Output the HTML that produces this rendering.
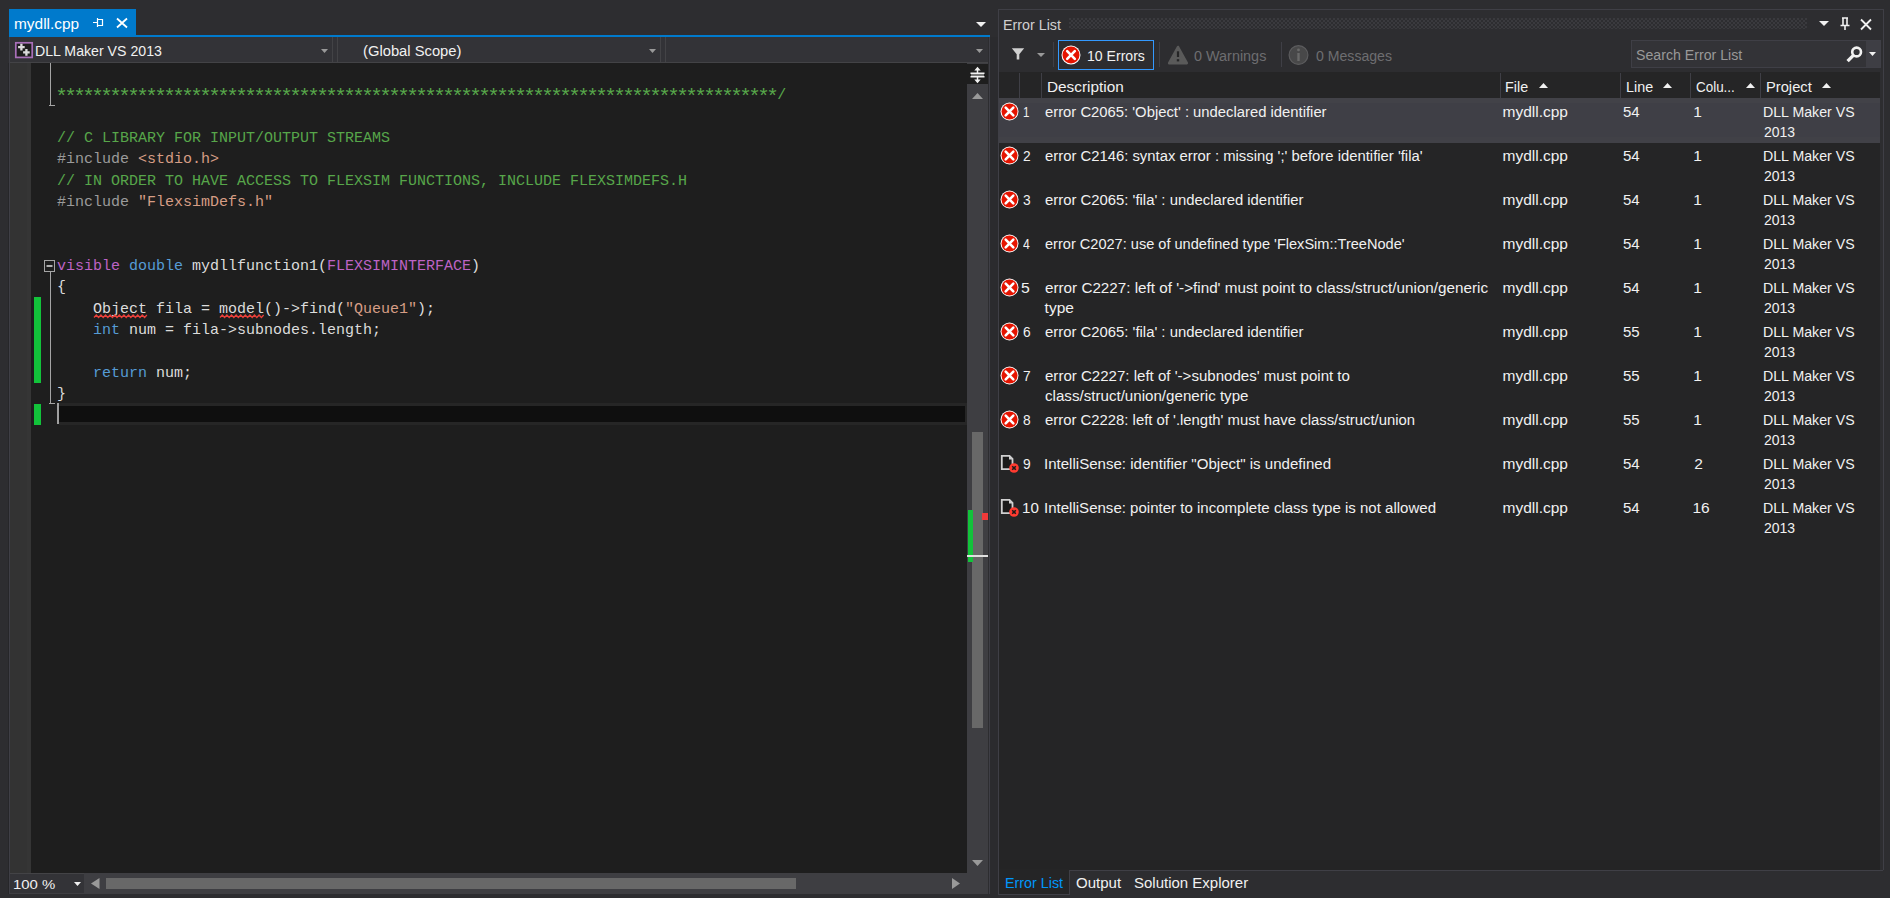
<!DOCTYPE html>
<html><head><meta charset="utf-8"><style>
*{margin:0;padding:0;box-sizing:border-box}
html,body{width:1890px;height:898px;overflow:hidden;background:#2d2d30;font-family:"Liberation Sans",sans-serif;color:#f1f1f1}
.a{position:absolute}
.ui{font-size:15px;white-space:pre;line-height:20px}
.code{font-family:"Liberation Mono",monospace;font-size:15px;white-space:pre;line-height:21.333px;color:#dcdcdc}
.cm{color:#57a64a}.pp{color:#9b9b9b}.st{color:#d69d85}.kw{color:#569cd6}.mc{color:#bd63c5}
svg{position:absolute;overflow:visible}
</style></head><body>
<div class="a" style="left:9px;top:9px;width:127px;height:26px;background:#007acc;"></div>
<div class="a" style="left:13.70px;top:14.00px;font-family:'Liberation Sans',sans-serif;font-size:15.5px;line-height:20px;white-space:pre;color:#ffffff;transform:scaleX(0.9953);transform-origin:0 0;">mydll.cpp</div>
<svg style="left:92px;top:17px" width="12" height="11" viewBox="0 0 12 11"><path d="M1 5.5H5.5M5.5 1V10M5.5 2.5H10.5V8.5H5.5" stroke="#fff" stroke-width="1.2" fill="none"/></svg>
<svg style="left:116px;top:18px" width="12" height="10" viewBox="0 0 12 10"><path d="M1 0.5L11 9.5M11 0.5L1 9.5" stroke="#fff" stroke-width="1.8" fill="none"/></svg>
<div class="a" style="left:9px;top:35px;width:981px;height:2px;background:#007acc;"></div>
<svg style="left:976.0px;top:22px" width="10" height="5" viewBox="0 0 10 5"><path d="M0 0H10L5.0 5Z" fill="#f1f1f1"/></svg>
<div class="a" style="left:9px;top:37px;width:981px;height:26px;background:#333337;border-bottom:1px solid #434346"></div>
<div class="a" style="left:9px;top:37px;width:1px;height:26px;background:#3f3f46;"></div>
<div class="a" style="left:332px;top:37px;width:1px;height:25px;background:#434346;"></div>
<div class="a" style="left:337px;top:37px;width:1px;height:25px;background:#434346;"></div>
<div class="a" style="left:660px;top:37px;width:1px;height:25px;background:#434346;"></div>
<div class="a" style="left:665px;top:37px;width:1px;height:25px;background:#434346;"></div>
<svg style="left:14px;top:41px" width="19" height="17" viewBox="0 0 19 17"><rect x="1.8" y="1.8" width="16.4" height="14.6" fill="#1e1e1e" stroke="#a86fb8" stroke-width="1.7"/><path d="M7.4 2.8V9.4M4.1 6.1H10.7" stroke="#dcdcdc" stroke-width="2.3"/><path d="M12.4 8.1V14.7M9.1 11.4H15.7" stroke="#dcdcdc" stroke-width="2.3"/></svg>
<div class="a" style="left:35.29px;top:41.00px;font-family:'Liberation Sans',sans-serif;font-size:15.5px;line-height:20px;white-space:pre;color:#f1f1f1;transform:scaleX(0.9130);transform-origin:0 0;">DLL Maker VS 2013</div>
<div class="a" style="left:362.95px;top:41.00px;font-family:'Liberation Sans',sans-serif;font-size:15.5px;line-height:20px;white-space:pre;color:#f1f1f1;transform:scaleX(0.9520);transform-origin:0 0;">(Global Scope)</div>
<svg style="left:321.0px;top:49px" width="7" height="4" viewBox="0 0 7 4"><path d="M0 0H7L3.5 4Z" fill="#999999"/></svg>
<svg style="left:648.5px;top:49px" width="7" height="4" viewBox="0 0 7 4"><path d="M0 0H7L3.5 4Z" fill="#999999"/></svg>
<svg style="left:975.5px;top:49px" width="7" height="4" viewBox="0 0 7 4"><path d="M0 0H7L3.5 4Z" fill="#999999"/></svg>
<div class="a" style="left:9px;top:63px;width:1px;height:831px;background:#3f3f46;"></div>
<div class="a" style="left:10px;top:63px;width:17px;height:810px;background:#333333;"></div>
<div class="a" style="left:27px;top:63px;width:4px;height:810px;background:#353535;"></div>
<div class="a" style="left:8px;top:63px;width:1px;height:831px;background:#262629;"></div>
<div class="a" style="left:31px;top:63px;width:936px;height:810px;background:#1e1e1e;"></div>
<div class="a" style="left:59px;top:403px;width:908px;height:22px;background:#262626;"></div>
<div class="a" style="left:59px;top:406px;width:906px;height:16px;background:#0f0f0f;"></div>
<div class="a" style="left:57px;top:403px;width:2px;height:21px;background:#a0a0a0;"></div>
<div class="a" style="left:34px;top:297px;width:7px;height:86px;background:#12c33a;"></div>
<div class="a" style="left:34px;top:404px;width:7px;height:21px;background:#12c33a;"></div>
<div class="a" style="left:50px;top:63px;width:1px;height:43px;background:#a5a5a5;"></div>
<div class="a" style="left:49px;top:105px;width:6px;height:1px;background:#a5a5a5;"></div>
<svg style="left:43px;top:259px" width="13" height="13" viewBox="0 0 13 13"><rect x="1.5" y="1.5" width="10" height="11" fill="#1e1e1e" stroke="#a5a5a5" stroke-width="1"/><path d="M3.5 7H9.5" stroke="#f1f1f1" stroke-width="1.4"/></svg>
<div class="a" style="left:50px;top:272px;width:1px;height:132px;background:#a5a5a5;"></div>
<div class="a" style="left:49px;top:403px;width:6px;height:1px;background:#a5a5a5;"></div>
<div class="a code" style="left:57px;top:83.333px"><span class="cm"><span style="font-size:21px;letter-spacing:-3.6px;position:relative;top:4px;left:-1.8px">********************************************************************************</span>/</span>

<span class="cm">// C LIBRARY FOR INPUT/OUTPUT STREAMS</span>
<span class="pp">#include </span><span class="st">&lt;stdio.h&gt;</span>
<span class="cm">// IN ORDER TO HAVE ACCESS TO FLEXSIM FUNCTIONS, INCLUDE FLEXSIMDEFS.H</span>
<span class="pp">#include </span><span class="st">"FlexsimDefs.h"</span>


<span class="mc">visible</span> <span class="kw">double</span> mydllfunction1(<span class="mc">FLEXSIMINTERFACE</span>)
{
    Object fila = model()-&gt;find(<span class="st">"Queue1"</span>);
    <span class="kw">int</span> num = fila-&gt;subnodes.length;

    <span class="kw">return</span> num;
}</div>
<svg style="left:0;top:0" width="1890" height="898"><path d="M94 317.5 L96.3 315 L98.6 317.5 L100.9 315 L103.2 317.5 L105.5 315 L107.8 317.5 L110.1 315 L112.4 317.5 L114.7 315 L117.0 317.5 L119.3 315 L121.6 317.5 L123.9 315 L126.2 317.5 L128.5 315 L130.8 317.5 L133.1 315 L135.4 317.5 L137.7 315 L140.0 317.5 L142.3 315 L144.6 317.5 L146.9 315" stroke="#e8403a" stroke-width="1.3" fill="none"/></svg>
<svg style="left:0;top:0" width="1890" height="898"><path d="M220 317.5 L222.3 315 L224.6 317.5 L226.9 315 L229.2 317.5 L231.5 315 L233.8 317.5 L236.1 315 L238.4 317.5 L240.7 315 L243.0 317.5 L245.3 315 L247.6 317.5 L249.9 315 L252.2 317.5 L254.5 315 L256.8 317.5 L259.1 315 L261.4 317.5 L263.7 315" stroke="#e8403a" stroke-width="1.3" fill="none"/></svg>
<div class="a" style="left:967px;top:63px;width:21px;height:831px;background:#3e3e42;"></div>
<div class="a" style="left:967px;top:64px;width:21px;height:20px;background:#1e1e1e;"></div>
<svg style="left:970px;top:66px" width="15" height="18" viewBox="0 0 15 18"><path d="M7.5 3V15" stroke="#f1f1f1" stroke-width="1.5"/><path d="M4.3 4.5L7.5 0.8L10.7 4.5Z M4.3 13.5L7.5 17.2L10.7 13.5Z" fill="#f1f1f1"/><path d="M0.5 7.2H14.5M0.5 10.8H14.5" stroke="#f1f1f1" stroke-width="1.5"/><path d="M1 9H14" stroke="#777" stroke-width="2"/></svg>
<svg style="left:972.0px;top:93px" width="11" height="6" viewBox="0 0 11 6"><path d="M0 6H11L5.5 0Z" fill="#999999"/></svg>
<div class="a" style="left:972px;top:432px;width:11px;height:296px;background:#686868;"></div>
<svg style="left:972.0px;top:860px" width="11" height="6" viewBox="0 0 11 6"><path d="M0 0H11L5.5 6Z" fill="#999999"/></svg>
<div class="a" style="left:968px;top:510px;width:5px;height:52px;background:#12c33a;"></div>
<div class="a" style="left:982px;top:513px;width:6px;height:7px;background:#f03a3a;"></div>
<div class="a" style="left:967px;top:555px;width:21px;height:2px;background:#e0e0e0;"></div>
<div class="a" style="left:10px;top:873px;width:978px;height:21px;background:#3e3e42;"></div>
<div class="a" style="left:10px;top:873px;width:74px;height:20px;background:#333337;border-top:1px solid #434346"></div>
<div class="a" style="left:12.69px;top:875.00px;font-family:'Liberation Sans',sans-serif;font-size:13.5px;line-height:20px;white-space:pre;color:#f1f1f1;transform:scaleX(1.1054);transform-origin:0 0;">100 %</div>
<svg style="left:74.0px;top:882px" width="7" height="4" viewBox="0 0 7 4"><path d="M0 0H7L3.5 4Z" fill="#f1f1f1"/></svg>
<svg style="left:91px;top:878px" width="9" height="11" viewBox="0 0 9 11"><path d="M8.5 0V11L0 5.5Z" fill="#999"/></svg>
<div class="a" style="left:106px;top:878px;width:690px;height:11px;background:#686868;"></div>
<svg style="left:952px;top:878px" width="8" height="11" viewBox="0 0 8 11"><path d="M0 0V11L8 5.5Z" fill="#999"/></svg>
<div class="a" style="left:988px;top:37px;width:1px;height:857px;background:#2d2d30;"></div>
<div class="a" style="left:989px;top:37px;width:1px;height:857px;background:#3f3f46;"></div>
<div class="a" style="left:990px;top:37px;width:8px;height:861px;background:#2b2b2e;"></div>
<div class="a" style="left:998px;top:9px;width:886px;height:862px;background:#2d2d30;border:1px solid #3f3f46"></div>
<div class="a" style="left:1002.68px;top:15.20px;font-family:'Liberation Sans',sans-serif;font-size:15.5px;line-height:20px;white-space:pre;color:#d0d0d0;transform:scaleX(0.9210);transform-origin:0 0;">Error List</div>
<div class="a" style="left:1069px;top:18px;width:738px;height:11px;background-image:radial-gradient(circle at 1px 1px,#3a3a3e 0.9px,transparent 1.1px),radial-gradient(circle at 3px 3px,#3a3a3e 0.9px,transparent 1.1px);background-size:4px 4px"></div>
<svg style="left:1819.0px;top:21px" width="10" height="5" viewBox="0 0 10 5"><path d="M0 0H10L5.0 5Z" fill="#f1f1f1"/></svg>
<svg style="left:1839px;top:17px" width="12" height="14" viewBox="0 0 12 14"><path d="M3 1H9M4 1V8M8 1V8M1.5 8.5H10.5M6 8.5V13" stroke="#f1f1f1" stroke-width="1.6" fill="none"/></svg>
<svg style="left:1860px;top:19px" width="12" height="11" viewBox="0 0 12 11"><path d="M1 0.5L11 10.5M11 0.5L1 10.5" stroke="#f1f1f1" stroke-width="1.8" fill="none"/></svg>
<svg style="left:1011px;top:47.5px" width="14" height="13" viewBox="0 0 14 13"><path d="M0.8 0.3H13.2L8.3 6.2V11.5H5.7V6.2Z" fill="#d0d0d0"/></svg>
<svg style="left:1037.0px;top:53px" width="8" height="4" viewBox="0 0 8 4"><path d="M0 0H8L4.0 4Z" fill="#999999"/></svg>
<div class="a" style="left:1053px;top:42px;width:1px;height:25px;background:#3f3f46;"></div>
<div class="a" style="left:1058px;top:40px;width:96px;height:30px;background:#2d2d30;border:1px solid #3399ff"></div>
<svg style="left:1061px;top:45px" width="20" height="20" viewBox="0 0 20 20"><circle cx="10.0" cy="10.0" r="9.5" fill="#fff"/><circle cx="10.0" cy="10.0" r="8.5" fill="#e51400"/><path d="M6.2 6.2L13.8 13.8M13.8 6.2L6.2 13.8" stroke="#fff" stroke-width="2.6" stroke-linecap="round"/></svg>
<div class="a" style="left:1087.09px;top:45.60px;font-family:'Liberation Sans',sans-serif;font-size:15.5px;line-height:20px;white-space:pre;color:#f1f1f1;transform:scaleX(0.9079);transform-origin:0 0;">10 Errors</div>
<div class="a" style="left:1159px;top:42px;width:1px;height:25px;background:#3f3f46;"></div>
<svg style="left:1167px;top:45px" width="22" height="20" viewBox="0 0 22 20"><path d="M11 2L19.8 18.2H2.2Z" fill="#5a5a5a" stroke="#5a5a5a" stroke-width="2.6" stroke-linejoin="round"/><path d="M11 6.3V12" stroke="#252526" stroke-width="2.2"/><rect x="9.8" y="14.2" width="2.4" height="2.2" fill="#252526"/></svg>
<div class="a" style="left:1193.50px;top:45.60px;font-family:'Liberation Sans',sans-serif;font-size:15.5px;line-height:20px;white-space:pre;color:#6d6d70;transform:scaleX(0.9295);transform-origin:0 0;">0 Warnings</div>
<div class="a" style="left:1281px;top:42px;width:1px;height:25px;background:#3f3f46;"></div>
<svg style="left:1288px;top:45px" width="21" height="21" viewBox="0 0 21 21"><circle cx="10.5" cy="10" r="9.4" fill="#484849" stroke="#5c5c5e" stroke-width="1.2"/><rect x="9.3" y="8" width="2.4" height="8" fill="#6a6a6a"/><circle cx="10.5" cy="4.9" r="1.4" fill="#6a6a6a"/></svg>
<div class="a" style="left:1315.60px;top:45.60px;font-family:'Liberation Sans',sans-serif;font-size:15.5px;line-height:20px;white-space:pre;color:#6d6d70;transform:scaleX(0.9096);transform-origin:0 0;">0 Messages</div>
<div class="a" style="left:1631px;top:40px;width:250px;height:28px;background:#333337;border:1px solid #3f3f46"></div>
<div class="a" style="left:1866px;top:41px;width:14px;height:26px;background:#3e3e44;"></div>
<div class="a" style="left:1636.09px;top:44.70px;font-family:'Liberation Sans',sans-serif;font-size:15.5px;line-height:20px;white-space:pre;color:#999999;transform:scaleX(0.9129);transform-origin:0 0;">Search Error List</div>
<svg style="left:1845px;top:46px" width="17" height="17" viewBox="0 0 17 17"><circle cx="11.6" cy="6" r="4.4" stroke="#f1f1f1" stroke-width="2.6" fill="none"/><path d="M8.6 9.2L2.6 15.2" stroke="#f1f1f1" stroke-width="3.3"/></svg>
<svg style="left:1869.0px;top:52px" width="7" height="4" viewBox="0 0 7 4"><path d="M0 0H7L3.5 4Z" fill="#f1f1f1"/></svg>
<div class="a" style="left:999px;top:72px;width:881px;height:798px;background:#252526;"></div>
<div class="a" style="left:999px;top:73px;width:881px;height:25px;background:#252526;"></div>
<div class="a" style="left:1019px;top:73px;width:1px;height:25px;background:#3f3f46;"></div>
<div class="a" style="left:1041px;top:73px;width:1px;height:25px;background:#3f3f46;"></div>
<div class="a" style="left:1500px;top:73px;width:1px;height:25px;background:#3f3f46;"></div>
<div class="a" style="left:1620px;top:73px;width:1px;height:25px;background:#3f3f46;"></div>
<div class="a" style="left:1690px;top:73px;width:1px;height:25px;background:#3f3f46;"></div>
<div class="a" style="left:1760px;top:73px;width:1px;height:25px;background:#3f3f46;"></div>
<div class="a" style="left:1046.91px;top:77.00px;font-family:'Liberation Sans',sans-serif;font-size:15.5px;line-height:20px;white-space:pre;color:#f1f1f1;transform:scaleX(0.9895);transform-origin:0 0;">Description</div>
<div class="a" style="left:1505.48px;top:77.00px;font-family:'Liberation Sans',sans-serif;font-size:15.5px;line-height:20px;white-space:pre;color:#f1f1f1;transform:scaleX(0.9250);transform-origin:0 0;">File</div>
<svg style="left:1539.0px;top:83px" width="9" height="5" viewBox="0 0 9 5"><path d="M0 5H9L4.5 0Z" fill="#f1f1f1"/></svg>
<div class="a" style="left:1625.58px;top:77.00px;font-family:'Liberation Sans',sans-serif;font-size:15.5px;line-height:20px;white-space:pre;color:#f1f1f1;transform:scaleX(0.9250);transform-origin:0 0;">Line</div>
<svg style="left:1663.0px;top:83px" width="9" height="5" viewBox="0 0 9 5"><path d="M0 5H9L4.5 0Z" fill="#f1f1f1"/></svg>
<div class="a" style="left:1696.30px;top:77.00px;font-family:'Liberation Sans',sans-serif;font-size:15.5px;line-height:20px;white-space:pre;color:#f1f1f1;transform:scaleX(0.8659);transform-origin:0 0;">Colu...</div>
<svg style="left:1746.0px;top:83px" width="9" height="5" viewBox="0 0 9 5"><path d="M0 5H9L4.5 0Z" fill="#f1f1f1"/></svg>
<div class="a" style="left:1765.75px;top:77.00px;font-family:'Liberation Sans',sans-serif;font-size:15.5px;line-height:20px;white-space:pre;color:#f1f1f1;transform:scaleX(0.9479);transform-origin:0 0;">Project</div>
<svg style="left:1822.0px;top:83px" width="9" height="5" viewBox="0 0 9 5"><path d="M0 5H9L4.5 0Z" fill="#f1f1f1"/></svg>
<div class="a" style="left:999px;top:98px;width:881px;height:45px;background:#3f3f46;"></div>
<div class="a" style="left:999px;top:98px;width:881px;height:5px;background:#424248;"></div>
<div class="a" style="left:999px;top:137px;width:881px;height:6px;background:#414147;"></div>
<svg style="left:1000px;top:102px" width="19" height="19" viewBox="0 0 19 19"><circle cx="9.5" cy="9.5" r="9.0" fill="#fff"/><circle cx="9.5" cy="9.5" r="8.0" fill="#e51400"/><path d="M5.7 5.7L13.3 13.3M13.3 5.7L5.7 13.3" stroke="#fff" stroke-width="2.6" stroke-linecap="round"/></svg>
<div class="a" style="left:1022.66px;top:101.70px;font-family:'Liberation Sans',sans-serif;font-size:15.5px;line-height:20px;white-space:pre;color:#f1f1f1;transform:scaleX(0.7429);transform-origin:0 0;">1</div>
<div class="a" style="left:1044.60px;top:101.70px;font-family:'Liberation Sans',sans-serif;font-size:15.5px;line-height:20px;white-space:pre;color:#f1f1f1;transform:scaleX(0.9559);transform-origin:0 0;">error C2065: 'Object' : undeclared identifier</div>
<div class="a" style="left:1502.50px;top:101.70px;font-family:'Liberation Sans',sans-serif;font-size:15.5px;line-height:20px;white-space:pre;color:#f1f1f1;">mydll.cpp</div>
<div class="a" style="left:1622.53px;top:101.70px;font-family:'Liberation Sans',sans-serif;font-size:15.5px;line-height:20px;white-space:pre;color:#f1f1f1;transform:scaleX(0.9688);transform-origin:0 0;">54</div>
<div class="a" style="left:1693.20px;top:101.70px;font-family:'Liberation Sans',sans-serif;font-size:15.5px;line-height:20px;white-space:pre;color:#f1f1f1;">1</div>
<div class="a" style="left:1762.59px;top:101.70px;font-family:'Liberation Sans',sans-serif;font-size:15.5px;line-height:20px;white-space:pre;color:#f1f1f1;transform:scaleX(0.9141);transform-origin:0 0;">DLL Maker VS</div>
<div class="a" style="left:1763.50px;top:121.70px;font-family:'Liberation Sans',sans-serif;font-size:15.5px;line-height:20px;white-space:pre;color:#f1f1f1;transform:scaleX(0.9029);transform-origin:0 0;">2013</div>
<svg style="left:1000px;top:146px" width="19" height="19" viewBox="0 0 19 19"><circle cx="9.5" cy="9.5" r="9.0" fill="#fff"/><circle cx="9.5" cy="9.5" r="8.0" fill="#e51400"/><path d="M5.7 5.7L13.3 13.3M13.3 5.7L5.7 13.3" stroke="#fff" stroke-width="2.6" stroke-linecap="round"/></svg>
<div class="a" style="left:1022.50px;top:145.70px;font-family:'Liberation Sans',sans-serif;font-size:15.5px;line-height:20px;white-space:pre;color:#f1f1f1;transform:scaleX(0.8875);transform-origin:0 0;">2</div>
<div class="a" style="left:1044.60px;top:145.70px;font-family:'Liberation Sans',sans-serif;font-size:15.5px;line-height:20px;white-space:pre;color:#f1f1f1;transform:scaleX(0.9574);transform-origin:0 0;">error C2146: syntax error : missing ';' before identifier 'fila'</div>
<div class="a" style="left:1502.50px;top:145.70px;font-family:'Liberation Sans',sans-serif;font-size:15.5px;line-height:20px;white-space:pre;color:#f1f1f1;">mydll.cpp</div>
<div class="a" style="left:1622.53px;top:145.70px;font-family:'Liberation Sans',sans-serif;font-size:15.5px;line-height:20px;white-space:pre;color:#f1f1f1;transform:scaleX(0.9688);transform-origin:0 0;">54</div>
<div class="a" style="left:1693.20px;top:145.70px;font-family:'Liberation Sans',sans-serif;font-size:15.5px;line-height:20px;white-space:pre;color:#f1f1f1;">1</div>
<div class="a" style="left:1762.59px;top:145.70px;font-family:'Liberation Sans',sans-serif;font-size:15.5px;line-height:20px;white-space:pre;color:#f1f1f1;transform:scaleX(0.9141);transform-origin:0 0;">DLL Maker VS</div>
<div class="a" style="left:1763.50px;top:165.70px;font-family:'Liberation Sans',sans-serif;font-size:15.5px;line-height:20px;white-space:pre;color:#f1f1f1;transform:scaleX(0.9029);transform-origin:0 0;">2013</div>
<svg style="left:1000px;top:190px" width="19" height="19" viewBox="0 0 19 19"><circle cx="9.5" cy="9.5" r="9.0" fill="#fff"/><circle cx="9.5" cy="9.5" r="8.0" fill="#e51400"/><path d="M5.7 5.7L13.3 13.3M13.3 5.7L5.7 13.3" stroke="#fff" stroke-width="2.6" stroke-linecap="round"/></svg>
<div class="a" style="left:1022.50px;top:189.70px;font-family:'Liberation Sans',sans-serif;font-size:15.5px;line-height:20px;white-space:pre;color:#f1f1f1;transform:scaleX(0.8875);transform-origin:0 0;">3</div>
<div class="a" style="left:1044.60px;top:189.70px;font-family:'Liberation Sans',sans-serif;font-size:15.5px;line-height:20px;white-space:pre;color:#f1f1f1;transform:scaleX(0.9589);transform-origin:0 0;">error C2065: 'fila' : undeclared identifier</div>
<div class="a" style="left:1502.50px;top:189.70px;font-family:'Liberation Sans',sans-serif;font-size:15.5px;line-height:20px;white-space:pre;color:#f1f1f1;">mydll.cpp</div>
<div class="a" style="left:1622.53px;top:189.70px;font-family:'Liberation Sans',sans-serif;font-size:15.5px;line-height:20px;white-space:pre;color:#f1f1f1;transform:scaleX(0.9688);transform-origin:0 0;">54</div>
<div class="a" style="left:1693.20px;top:189.70px;font-family:'Liberation Sans',sans-serif;font-size:15.5px;line-height:20px;white-space:pre;color:#f1f1f1;">1</div>
<div class="a" style="left:1762.59px;top:189.70px;font-family:'Liberation Sans',sans-serif;font-size:15.5px;line-height:20px;white-space:pre;color:#f1f1f1;transform:scaleX(0.9141);transform-origin:0 0;">DLL Maker VS</div>
<div class="a" style="left:1763.50px;top:209.70px;font-family:'Liberation Sans',sans-serif;font-size:15.5px;line-height:20px;white-space:pre;color:#f1f1f1;transform:scaleX(0.9029);transform-origin:0 0;">2013</div>
<svg style="left:1000px;top:234px" width="19" height="19" viewBox="0 0 19 19"><circle cx="9.5" cy="9.5" r="9.0" fill="#fff"/><circle cx="9.5" cy="9.5" r="8.0" fill="#e51400"/><path d="M5.7 5.7L13.3 13.3M13.3 5.7L5.7 13.3" stroke="#fff" stroke-width="2.6" stroke-linecap="round"/></svg>
<div class="a" style="left:1022.50px;top:233.70px;font-family:'Liberation Sans',sans-serif;font-size:15.5px;line-height:20px;white-space:pre;color:#f1f1f1;transform:scaleX(0.7889);transform-origin:0 0;">4</div>
<div class="a" style="left:1044.60px;top:233.70px;font-family:'Liberation Sans',sans-serif;font-size:15.5px;line-height:20px;white-space:pre;color:#f1f1f1;transform:scaleX(0.9395);transform-origin:0 0;">error C2027: use of undefined type 'FlexSim::TreeNode'</div>
<div class="a" style="left:1502.50px;top:233.70px;font-family:'Liberation Sans',sans-serif;font-size:15.5px;line-height:20px;white-space:pre;color:#f1f1f1;">mydll.cpp</div>
<div class="a" style="left:1622.53px;top:233.70px;font-family:'Liberation Sans',sans-serif;font-size:15.5px;line-height:20px;white-space:pre;color:#f1f1f1;transform:scaleX(0.9688);transform-origin:0 0;">54</div>
<div class="a" style="left:1693.20px;top:233.70px;font-family:'Liberation Sans',sans-serif;font-size:15.5px;line-height:20px;white-space:pre;color:#f1f1f1;">1</div>
<div class="a" style="left:1762.59px;top:233.70px;font-family:'Liberation Sans',sans-serif;font-size:15.5px;line-height:20px;white-space:pre;color:#f1f1f1;transform:scaleX(0.9141);transform-origin:0 0;">DLL Maker VS</div>
<div class="a" style="left:1763.50px;top:253.70px;font-family:'Liberation Sans',sans-serif;font-size:15.5px;line-height:20px;white-space:pre;color:#f1f1f1;transform:scaleX(0.9029);transform-origin:0 0;">2013</div>
<svg style="left:1000px;top:278px" width="19" height="19" viewBox="0 0 19 19"><circle cx="9.5" cy="9.5" r="9.0" fill="#fff"/><circle cx="9.5" cy="9.5" r="8.0" fill="#e51400"/><path d="M5.7 5.7L13.3 13.3M13.3 5.7L5.7 13.3" stroke="#fff" stroke-width="2.6" stroke-linecap="round"/></svg>
<div class="a" style="left:1021.49px;top:277.70px;font-family:'Liberation Sans',sans-serif;font-size:15.5px;line-height:20px;white-space:pre;color:#f1f1f1;transform:scaleX(1.0143);transform-origin:0 0;">5</div>
<div class="a" style="left:1044.60px;top:277.70px;font-family:'Liberation Sans',sans-serif;font-size:15.5px;line-height:20px;white-space:pre;color:#f1f1f1;transform:scaleX(0.9825);transform-origin:0 0;">error C2227: left of '-&gt;find' must point to class/struct/union/generic</div>
<div class="a" style="left:1044.60px;top:297.70px;font-family:'Liberation Sans',sans-serif;font-size:15.5px;line-height:20px;white-space:pre;color:#f1f1f1;">type</div>
<div class="a" style="left:1502.50px;top:277.70px;font-family:'Liberation Sans',sans-serif;font-size:15.5px;line-height:20px;white-space:pre;color:#f1f1f1;">mydll.cpp</div>
<div class="a" style="left:1622.53px;top:277.70px;font-family:'Liberation Sans',sans-serif;font-size:15.5px;line-height:20px;white-space:pre;color:#f1f1f1;transform:scaleX(0.9688);transform-origin:0 0;">54</div>
<div class="a" style="left:1693.20px;top:277.70px;font-family:'Liberation Sans',sans-serif;font-size:15.5px;line-height:20px;white-space:pre;color:#f1f1f1;">1</div>
<div class="a" style="left:1762.59px;top:277.70px;font-family:'Liberation Sans',sans-serif;font-size:15.5px;line-height:20px;white-space:pre;color:#f1f1f1;transform:scaleX(0.9141);transform-origin:0 0;">DLL Maker VS</div>
<div class="a" style="left:1763.50px;top:297.70px;font-family:'Liberation Sans',sans-serif;font-size:15.5px;line-height:20px;white-space:pre;color:#f1f1f1;transform:scaleX(0.9029);transform-origin:0 0;">2013</div>
<svg style="left:1000px;top:322px" width="19" height="19" viewBox="0 0 19 19"><circle cx="9.5" cy="9.5" r="9.0" fill="#fff"/><circle cx="9.5" cy="9.5" r="8.0" fill="#e51400"/><path d="M5.7 5.7L13.3 13.3M13.3 5.7L5.7 13.3" stroke="#fff" stroke-width="2.6" stroke-linecap="round"/></svg>
<div class="a" style="left:1022.50px;top:321.70px;font-family:'Liberation Sans',sans-serif;font-size:15.5px;line-height:20px;white-space:pre;color:#f1f1f1;transform:scaleX(0.8875);transform-origin:0 0;">6</div>
<div class="a" style="left:1044.60px;top:321.70px;font-family:'Liberation Sans',sans-serif;font-size:15.5px;line-height:20px;white-space:pre;color:#f1f1f1;transform:scaleX(0.9589);transform-origin:0 0;">error C2065: 'fila' : undeclared identifier</div>
<div class="a" style="left:1502.50px;top:321.70px;font-family:'Liberation Sans',sans-serif;font-size:15.5px;line-height:20px;white-space:pre;color:#f1f1f1;">mydll.cpp</div>
<div class="a" style="left:1622.53px;top:321.70px;font-family:'Liberation Sans',sans-serif;font-size:15.5px;line-height:20px;white-space:pre;color:#f1f1f1;transform:scaleX(0.9688);transform-origin:0 0;">55</div>
<div class="a" style="left:1693.20px;top:321.70px;font-family:'Liberation Sans',sans-serif;font-size:15.5px;line-height:20px;white-space:pre;color:#f1f1f1;">1</div>
<div class="a" style="left:1762.59px;top:321.70px;font-family:'Liberation Sans',sans-serif;font-size:15.5px;line-height:20px;white-space:pre;color:#f1f1f1;transform:scaleX(0.9141);transform-origin:0 0;">DLL Maker VS</div>
<div class="a" style="left:1763.50px;top:341.70px;font-family:'Liberation Sans',sans-serif;font-size:15.5px;line-height:20px;white-space:pre;color:#f1f1f1;transform:scaleX(0.9029);transform-origin:0 0;">2013</div>
<svg style="left:1000px;top:366px" width="19" height="19" viewBox="0 0 19 19"><circle cx="9.5" cy="9.5" r="9.0" fill="#fff"/><circle cx="9.5" cy="9.5" r="8.0" fill="#e51400"/><path d="M5.7 5.7L13.3 13.3M13.3 5.7L5.7 13.3" stroke="#fff" stroke-width="2.6" stroke-linecap="round"/></svg>
<div class="a" style="left:1022.50px;top:365.70px;font-family:'Liberation Sans',sans-serif;font-size:15.5px;line-height:20px;white-space:pre;color:#f1f1f1;transform:scaleX(0.8875);transform-origin:0 0;">7</div>
<div class="a" style="left:1044.60px;top:365.70px;font-family:'Liberation Sans',sans-serif;font-size:15.5px;line-height:20px;white-space:pre;color:#f1f1f1;transform:scaleX(0.9713);transform-origin:0 0;">error C2227: left of '-&gt;subnodes' must point to</div>
<div class="a" style="left:1044.60px;top:385.70px;font-family:'Liberation Sans',sans-serif;font-size:15.5px;line-height:20px;white-space:pre;color:#f1f1f1;transform:scaleX(0.9760);transform-origin:0 0;">class/struct/union/generic type</div>
<div class="a" style="left:1502.50px;top:365.70px;font-family:'Liberation Sans',sans-serif;font-size:15.5px;line-height:20px;white-space:pre;color:#f1f1f1;">mydll.cpp</div>
<div class="a" style="left:1622.53px;top:365.70px;font-family:'Liberation Sans',sans-serif;font-size:15.5px;line-height:20px;white-space:pre;color:#f1f1f1;transform:scaleX(0.9688);transform-origin:0 0;">55</div>
<div class="a" style="left:1693.20px;top:365.70px;font-family:'Liberation Sans',sans-serif;font-size:15.5px;line-height:20px;white-space:pre;color:#f1f1f1;">1</div>
<div class="a" style="left:1762.59px;top:365.70px;font-family:'Liberation Sans',sans-serif;font-size:15.5px;line-height:20px;white-space:pre;color:#f1f1f1;transform:scaleX(0.9141);transform-origin:0 0;">DLL Maker VS</div>
<div class="a" style="left:1763.50px;top:385.70px;font-family:'Liberation Sans',sans-serif;font-size:15.5px;line-height:20px;white-space:pre;color:#f1f1f1;transform:scaleX(0.9029);transform-origin:0 0;">2013</div>
<svg style="left:1000px;top:410px" width="19" height="19" viewBox="0 0 19 19"><circle cx="9.5" cy="9.5" r="9.0" fill="#fff"/><circle cx="9.5" cy="9.5" r="8.0" fill="#e51400"/><path d="M5.7 5.7L13.3 13.3M13.3 5.7L5.7 13.3" stroke="#fff" stroke-width="2.6" stroke-linecap="round"/></svg>
<div class="a" style="left:1022.50px;top:409.70px;font-family:'Liberation Sans',sans-serif;font-size:15.5px;line-height:20px;white-space:pre;color:#f1f1f1;transform:scaleX(0.8875);transform-origin:0 0;">8</div>
<div class="a" style="left:1044.60px;top:409.70px;font-family:'Liberation Sans',sans-serif;font-size:15.5px;line-height:20px;white-space:pre;color:#f1f1f1;transform:scaleX(0.9590);transform-origin:0 0;">error C2228: left of '.length' must have class/struct/union</div>
<div class="a" style="left:1502.50px;top:409.70px;font-family:'Liberation Sans',sans-serif;font-size:15.5px;line-height:20px;white-space:pre;color:#f1f1f1;">mydll.cpp</div>
<div class="a" style="left:1622.53px;top:409.70px;font-family:'Liberation Sans',sans-serif;font-size:15.5px;line-height:20px;white-space:pre;color:#f1f1f1;transform:scaleX(0.9688);transform-origin:0 0;">55</div>
<div class="a" style="left:1693.20px;top:409.70px;font-family:'Liberation Sans',sans-serif;font-size:15.5px;line-height:20px;white-space:pre;color:#f1f1f1;">1</div>
<div class="a" style="left:1762.59px;top:409.70px;font-family:'Liberation Sans',sans-serif;font-size:15.5px;line-height:20px;white-space:pre;color:#f1f1f1;transform:scaleX(0.9141);transform-origin:0 0;">DLL Maker VS</div>
<div class="a" style="left:1763.50px;top:429.70px;font-family:'Liberation Sans',sans-serif;font-size:15.5px;line-height:20px;white-space:pre;color:#f1f1f1;transform:scaleX(0.9029);transform-origin:0 0;">2013</div>
<svg style="left:1000px;top:454px" width="20" height="20" viewBox="0 0 20 20"><path d="M1.8 1.8H9.5L12.5 4.8V15.2H1.8Z" fill="#1a1a1a" stroke="#d0d0d0" stroke-width="1.8"/><path d="M9 1.5V5.5H13" fill="#d0d0d0"/><circle cx="14" cy="14" r="4.8" fill="#ff3b30"/><path d="M12.2 12.2L15.8 15.8M15.8 12.2L12.2 15.8" stroke="#1a1a1a" stroke-width="1.6"/></svg>
<div class="a" style="left:1022.50px;top:453.70px;font-family:'Liberation Sans',sans-serif;font-size:15.5px;line-height:20px;white-space:pre;color:#f1f1f1;transform:scaleX(0.8875);transform-origin:0 0;">9</div>
<div class="a" style="left:1043.63px;top:453.70px;font-family:'Liberation Sans',sans-serif;font-size:15.5px;line-height:20px;white-space:pre;color:#f1f1f1;transform:scaleX(0.9718);transform-origin:0 0;">IntelliSense: identifier "Object" is undefined</div>
<div class="a" style="left:1502.50px;top:453.70px;font-family:'Liberation Sans',sans-serif;font-size:15.5px;line-height:20px;white-space:pre;color:#f1f1f1;">mydll.cpp</div>
<div class="a" style="left:1622.53px;top:453.70px;font-family:'Liberation Sans',sans-serif;font-size:15.5px;line-height:20px;white-space:pre;color:#f1f1f1;transform:scaleX(0.9688);transform-origin:0 0;">54</div>
<div class="a" style="left:1694.20px;top:453.70px;font-family:'Liberation Sans',sans-serif;font-size:15.5px;line-height:20px;white-space:pre;color:#f1f1f1;">2</div>
<div class="a" style="left:1762.59px;top:453.70px;font-family:'Liberation Sans',sans-serif;font-size:15.5px;line-height:20px;white-space:pre;color:#f1f1f1;transform:scaleX(0.9141);transform-origin:0 0;">DLL Maker VS</div>
<div class="a" style="left:1763.50px;top:473.70px;font-family:'Liberation Sans',sans-serif;font-size:15.5px;line-height:20px;white-space:pre;color:#f1f1f1;transform:scaleX(0.9029);transform-origin:0 0;">2013</div>
<svg style="left:1000px;top:498px" width="20" height="20" viewBox="0 0 20 20"><path d="M1.8 1.8H9.5L12.5 4.8V15.2H1.8Z" fill="#1a1a1a" stroke="#d0d0d0" stroke-width="1.8"/><path d="M9 1.5V5.5H13" fill="#d0d0d0"/><circle cx="14" cy="14" r="4.8" fill="#ff3b30"/><path d="M12.2 12.2L15.8 15.8M15.8 12.2L12.2 15.8" stroke="#1a1a1a" stroke-width="1.6"/></svg>
<div class="a" style="left:1021.52px;top:497.70px;font-family:'Liberation Sans',sans-serif;font-size:15.5px;line-height:20px;white-space:pre;color:#f1f1f1;transform:scaleX(0.9750);transform-origin:0 0;">10</div>
<div class="a" style="left:1043.63px;top:497.70px;font-family:'Liberation Sans',sans-serif;font-size:15.5px;line-height:20px;white-space:pre;color:#f1f1f1;transform:scaleX(0.9702);transform-origin:0 0;">IntelliSense: pointer to incomplete class type is not allowed</div>
<div class="a" style="left:1502.50px;top:497.70px;font-family:'Liberation Sans',sans-serif;font-size:15.5px;line-height:20px;white-space:pre;color:#f1f1f1;">mydll.cpp</div>
<div class="a" style="left:1622.53px;top:497.70px;font-family:'Liberation Sans',sans-serif;font-size:15.5px;line-height:20px;white-space:pre;color:#f1f1f1;transform:scaleX(0.9688);transform-origin:0 0;">54</div>
<div class="a" style="left:1692.50px;top:497.70px;font-family:'Liberation Sans',sans-serif;font-size:15.5px;line-height:20px;white-space:pre;color:#f1f1f1;">16</div>
<div class="a" style="left:1762.59px;top:497.70px;font-family:'Liberation Sans',sans-serif;font-size:15.5px;line-height:20px;white-space:pre;color:#f1f1f1;transform:scaleX(0.9141);transform-origin:0 0;">DLL Maker VS</div>
<div class="a" style="left:1763.50px;top:517.70px;font-family:'Liberation Sans',sans-serif;font-size:15.5px;line-height:20px;white-space:pre;color:#f1f1f1;transform:scaleX(0.9029);transform-origin:0 0;">2013</div>
<div class="a" style="left:999px;top:870px;width:885px;height:28px;background:#2d2d30;"></div>
<div class="a" style="left:1069px;top:870px;width:814px;height:1px;background:#3f3f46;"></div>
<div class="a" style="left:999px;top:860px;width:881px;height:10px;background:#242425;"></div>
<div class="a" style="left:998px;top:869px;width:71px;height:26px;background:#252526;border-bottom:1px solid #3f3f46;border-left:1px solid #3f3f46"></div>
<div class="a" style="left:1069px;top:870px;width:1px;height:25px;background:#3f3f46;"></div>
<div class="a" style="left:1004.78px;top:873.20px;font-family:'Liberation Sans',sans-serif;font-size:15.5px;line-height:20px;white-space:pre;color:#0097fb;transform:scaleX(0.9226);transform-origin:0 0;">Error List</div>
<div class="a" style="left:1076.40px;top:873.40px;font-family:'Liberation Sans',sans-serif;font-size:15.5px;line-height:20px;white-space:pre;color:#f1f1f1;transform:scaleX(0.9681);transform-origin:0 0;">Output</div>
<div class="a" style="left:1133.63px;top:873.40px;font-family:'Liberation Sans',sans-serif;font-size:15.5px;line-height:20px;white-space:pre;color:#f1f1f1;transform:scaleX(0.9675);transform-origin:0 0;">Solution Explorer</div>
</body></html>
